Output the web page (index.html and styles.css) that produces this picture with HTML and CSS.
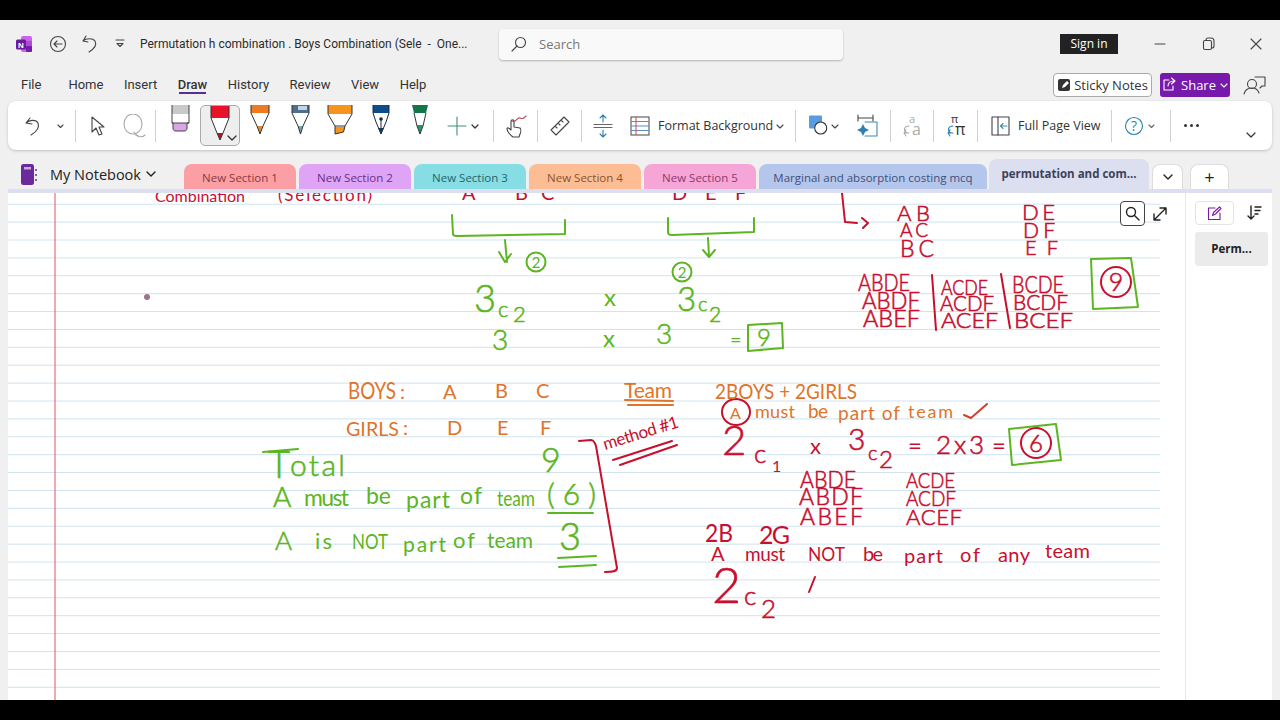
FILE: index.html
```html
<!DOCTYPE html>
<html lang="en">
<head>
    <meta charset="UTF-8">
    <title>Permutation h combination - OneNote</title>
    <link rel="stylesheet" href="styles.css">
</head>
<body>
<div class="app">

    <!-- Title bar -->
    <div class="titlebar">
        <svg width="18" height="18" viewBox="0 0 18 18"><rect x="5" y="1" width="11" height="16" rx="2" fill="#ca64ea"/><rect x="10" y="6" width="6" height="5" fill="#ae4bd5"/><rect x="10" y="11" width="6" height="6" rx="1" fill="#7719aa"/><rect y="4.500" width="10" height="10" rx="1.500" fill="#6a1a9c"/><text x="5" y="12.500" text-anchor="middle" class="logo-n">N</text></svg>
        <svg width="40" height="24" viewBox="0 0 40 24" class="ic"><circle cx="24" cy="12" r="7.500"/><path d="M28 12h-8M23 9l-3 3 3 3"/></svg>
        <svg width="32" height="24" viewBox="0 0 32 24" class="ic"><path d="M12 4L9 9l5 1M9 9c3-3 10-3 12 0 2 4-1 8-6 11"/></svg>
        <svg width="28" height="24" viewBox="0 0 28 24" class="ic"><path d="M10 8h8M11 11.500h6l-3 3z"/></svg>
        <div class="doc-title">Permutation h combination . Boys Combination (Sele&nbsp; -&nbsp; One...</div>
        <div class="search">
            <svg width="16" height="16" viewBox="0 0 16 16" class="ic"><circle cx="9.500" cy="6.500" r="5"/><path d="M6 10l-5 5"/></svg>
            <span>Search</span>
        </div>
        <div class="signin">Sign in</div>
        <svg width="66" height="24" viewBox="0 0 66 24" class="ic"><path d="M37 12h10"/></svg>
        <svg width="48" height="24" viewBox="0 0 48 24" class="ic"><rect x="19.500" y="8.500" width="8" height="9" rx="1.500"/><path d="M22 8c0-2 1-2 2-2h3c2 0 3 1 3 3v5c0 1-1 2-2 2"/></svg>
        <svg width="48" height="24" viewBox="0 0 48 24" class="ic"><path d="M19 7l10 10M29 7L19 17"/></svg>
    </div>

    <!-- Menu -->
    <div class="menubar">
        <span class="menu-file">File</span>
        <span>Home</span>
        <span>Insert</span>
        <span class="menu-on">Draw</span>
        <span>History</span>
        <span>Review</span>
        <span>View</span>
        <span>Help</span>
        <div class="sticky">
            <svg width="14" height="14" viewBox="0 0 14 14"><rect x="1" y="1" width="12" height="12" rx="2" fill="#333"/><path d="M5 10l1-3 4-4 2 2-4 4z" fill="#fff"/></svg>
            Sticky Notes
        </div>
        <div class="share">
            <svg width="15" height="15" viewBox="0 0 15 15" class="ic-w"><path d="M7 3H2v10h9V9M6 9c0-3 2-5 6-5M9.500 1L13 4 9.500 7"/></svg>
            Share
            <svg width="8" height="8" viewBox="0 0 8 8" class="ic-w"><path d="M1 3l3 3 3-3"/></svg>
        </div>
        <svg class="person" width="50" height="24" viewBox="0 0 50 24"><circle cx="22" cy="11" r="4.500"/><path d="M14 21c1-4 4-6 8-6s6 2 7 5M25 4h10v9h-3l-2 2"/></svg>
    </div>

    <!-- Draw ribbon -->
    <div class="ribbon">
        <svg width="24" height="24" viewBox="0 0 24 24" class="ic"><path d="M8 4L4 9l6 1M4 9c3-3 10-4 12 0 2 5-2 9-7 12"/></svg>
        <svg width="29" height="24" viewBox="0 0 29 24" class="ic"><path d="M12 11l2.500 2.500L17 11"/></svg>
        <i class="sep"></i>
        <svg width="42" height="24" viewBox="0 0 42 24" class="ic"><path d="M16 3v15l4-4 3 7 3-1-3-7h5z"/></svg>
        <svg width="37" height="24" viewBox="0 0 37 24" class="ic-g"><ellipse cx="15" cy="10" rx="9" ry="10"/><path d="M16 18c2 5 8 6 11 3"/></svg>
        <i class="sep"></i>

        <!-- pens -->
        <svg class="pen" width="44" height="42" viewBox="0 0 44 42"><path d="M16 0h17v9H16z" fill="#c9c9c9"/><path d="M16 9h17v9H16z" fill="#fff"/><path d="M17 18h14v5c0 2-1 3-3 3h-8c-2 0-3-1-3-3z" fill="#dba6e6"/><path d="M16 0v18h1v5c0 2 1 3 3 3h8c2 0 3-1 3-3v-5h2V0M16 18h17" fill="none" stroke="#444"/></svg>
        <div class="pen-on">
            <svg width="38" height="39" viewBox="0 0 38 39"><path d="M10 0h18v12H10z" fill="#e8122a"/><path d="M10 12h18l-6 15h-6z" fill="#fff"/><path d="M16 27h6l-3 7z" fill="#b3162a"/><path d="M10 0v12l6 15 3 7 3-7 6-15V0" fill="none" stroke="#333"/><path d="M27 30l4 4 4-4" class="chev"/></svg>
        </div>
        <svg class="pen" width="40" height="42" viewBox="0 0 40 42"><path d="M11 0h18v8H11z" fill="#ee7b22"/><path d="M11 8h18l-6 13h-6z" fill="#fff"/><path d="M17 21h6l-3 8z" fill="#e88a3a"/><path d="M11 0v8l6 13 3 8 3-8 6-13V0" fill="none" stroke="#333"/></svg>
        <svg class="pen" width="40" height="42" viewBox="0 0 40 42"><path d="M12 0h17v8H12z" fill="#4f6f8c"/><path d="M18 1h9v4h-9z" fill="#bcd8e6"/><path d="M12 8h17l-6 13h-5z" fill="#fff"/><path d="M18 21h5l-2.500 8z" fill="#71a8b8"/><path d="M12 0v8l6 13 2.500 8 2.500-8 6-13V0" fill="none" stroke="#333"/></svg>
        <svg class="pen" width="40" height="42" viewBox="0 0 40 42"><path d="M8 0h24v9H8z" fill="#f7941d"/><path d="M8 9h24l-7 12H15z" fill="#fff"/><path d="M15 22h10l-1.500 5-8.500 2z" fill="#f7941d"/><path d="M8 0v9l7 12v8l8.500-2 1.500-6 7-12V0M15 21h10" fill="none" stroke="#333"/></svg>
        <svg class="pen" width="41" height="42" viewBox="0 0 41 42"><path d="M13 0h16v8H13z" fill="#0f4c8a"/><path d="M13 8h16l-3 9-5 12-5-12z" fill="#fff"/><path d="M13 0v8l3 9 5 12 5-12 3-9V0M21 14v15" fill="none" stroke="#1c2a3a"/><circle cx="21" cy="14" r="1.800" fill="#1c2a3a"/><path d="M18 23h6l-3 6z" fill="#1c3a54"/></svg>
        <svg class="pen" width="39" height="42" viewBox="0 0 39 42"><path d="M11 0h16l-1 4-1 4H13l-1-4z" fill="#13764a"/><path d="M13 8h12l-4 13h-4z" fill="#fff"/><path d="M16 20h6l-3 9z" fill="#1b9b62"/><path d="M13 8l3 13 3 8 3-8 3-13" fill="none" stroke="#333"/></svg>
        <svg width="53" height="24" viewBox="0 0 53 24" class="plus"><path d="M17 3v18M8 12h18"/><path d="M32 11l3 3 3-3" class="chev"/></svg>
        <i class="sep"></i>

        <svg width="43" height="26" viewBox="0 0 43 26" class="ic"><path d="M19 24c-3-2-6-6-6-8s2-1 4 1V9c0-3 3-3 3 0v5l6 1c1 1 1 4 0 6l-1 3z"/><path d="M18 8c4 2 5-4 8-3s3 1 6-2" class="ink-red"/></svg>
        <i class="sep"></i>
        <svg width="43" height="24" viewBox="0 0 43 24" class="ic"><path d="M13 16L26 3l5 5-13 13zM17 12l2 2M20 9l2 2M23 6l2 2"/></svg>
        <i class="sep"></i>
        <svg width="42" height="26" viewBox="0 0 42 26" class="ic-b"><path d="M21 2v7M18 5l3-3 3 3M21 17v7M18 21l3 3 3-3"/><path d="M12 11.500h18M12 14.500h18" class="grey"/></svg>
        <svg width="30" height="24" viewBox="0 0 30 24"><rect x="7" y="3" width="18" height="18" fill="none" stroke="#444"/><path d="M7 7.500h18M7 12h18M7 16.500h18" stroke="#5a8cc5" fill="none"/><path d="M12 3v18" stroke="#c05050"/></svg>
        <span class="rb-label fmt">Format Background</span>
        <svg width="23" height="24" viewBox="0 0 23 24" class="ic"><path d="M5 11l3 3 3-3"/></svg>
        <i class="sep"></i>

        <svg width="46" height="24" viewBox="0 0 46 24" class="ic"><rect x="13" y="1.500" width="13" height="13" rx="1" fill="#5a9be0" stroke="none"/><circle cx="24.700" cy="14" r="6" fill="#fff" stroke="#333"/><path d="M36 11l3 3 3-3"/></svg>
        <svg width="48" height="26" viewBox="0 0 48 26" class="ic"><path d="M16 2v6M31 2v6M16 5h15"/><path d="M23 9h12v14H23" class="blue"/><path d="M21 11l2 4 4 2-4 2-2 4-2-4-4-2 4-2z" fill="#2f7fb0" stroke="none"/></svg>
        <i class="sep"></i>
        <svg width="42" height="26" viewBox="0 0 42 26" class="ic-g"><path d="M18 13c-5 0-6 5-2 7M13 20h5M15 17l-2 3 2 3"/><text x="18" y="10" class="rb-math">a</text><text x="21" y="22" class="rb-math big">a</text></svg>
        <i class="sep"></i>
        <svg width="43" height="26" viewBox="0 0 43 26" class="ic-b"><path d="M19 13c-5 0-6 5-2 7M14 20h5M16 17l-2 3 2 3"/><text x="17" y="10" class="rb-pi">π</text><text x="21" y="22" class="rb-pi big">π</text></svg>
        <i class="sep"></i>
        <svg width="36" height="24" viewBox="0 0 36 24" class="ic"><rect x="14" y="3" width="17" height="18"/><path d="M20 3v18"/><path d="M29 12h-6M25 9.500L22.500 12l2.500 2.500" class="blue"/></svg>
        <span class="rb-label full">Full Page View</span>
        <i class="sep"></i>
        <svg width="58" height="24" viewBox="0 0 58 24" class="ic-b"><circle cx="22" cy="12" r="8.500"/><text x="22" y="16.500" text-anchor="middle" class="rb-help">?</text><path d="M37 11l2.500 2.500L42 11" class="grey"/></svg>
        <i class="sep"></i>
        <div class="dots"><i></i><i></i><i></i></div>
        <svg class="rb-more" width="20" height="12" viewBox="0 0 20 12"><path d="M6 3l4 4 4-4"/></svg>
    </div>

    <!-- Notebook name and section tabs -->
    <div class="tabsrow">
        <div class="notebook">
            <svg width="16" height="21" viewBox="0 0 16 21"><rect width="13" height="21" rx="2.500" fill="#6b2a9b"/><rect x="3" y="3" width="7" height="2.500" fill="#c9a9e4"/><path d="M15 5v2M15 10v2M15 15v2" stroke="#6b2a9b" stroke-width="1.500"/></svg>
            <span>My Notebook</span>
            <svg width="10" height="8" viewBox="0 0 10 8" class="ic-d"><path d="M1 2l4 4 4-4"/></svg>
        </div>
        <div class="tab t1">New Section 1</div>
        <div class="tab t2">New Section 2</div>
        <div class="tab t3">New Section 3</div>
        <div class="tab t4">New Section 4</div>
        <div class="tab t5">New Section 5</div>
        <div class="tab t6">Marginal and absorption costing mcq</div>
        <div class="tab t7">permutation and com...</div>
        <div class="tab-btn more"><svg width="10" height="8" viewBox="0 0 10 8" class="ic-d"><path d="M1 2l4 4 4-4"/></svg></div>
        <div class="tab-btn add">+</div>
    </div>

    <div class="main">
        <div class="canvas">
            <div class="ruled"></div>

            <svg class="ink" viewBox="8 193 1177 507" width="1177" height="507">
                <line x1="55" y1="193" x2="55" y2="700" class="margin-line"/>
                <circle cx="147" cy="297" r="3" fill="#9a7488"/>

                <!-- red notes, top -->
                <g class="red">
                    <text x="155" y="202" font-size="16" textLength="90">Combination</text>
                    <text x="278" y="201" font-size="17" textLength="94">(Selection)</text>
                    <text x="462" y="200" font-size="20">A</text>
                    <text x="515" y="200" font-size="20">B</text>
                    <text x="541" y="200" font-size="20">C</text>
                    <text x="672" y="200" font-size="20">D</text>
                    <text x="705" y="200" font-size="20">E</text>
                    <text x="735" y="200" font-size="20">F</text>
                </g>
                <g class="red lite">
                    <text x="897" y="221" font-size="22" textLength="33">AB</text>
                    <text x="900" y="237" font-size="19" textLength="28">AC</text>
                    <text x="900" y="257" font-size="23" textLength="34">BC</text>
                    <text x="1022" y="220" font-size="22" textLength="33">DE</text>
                    <text x="1023" y="238" font-size="21" textLength="32">DF</text>
                    <text x="1025" y="255" font-size="20" textLength="33">EF</text>

                    <text x="858" y="291" font-size="23" textLength="52" lengthAdjust="spacingAndGlyphs">ABDE</text>
                    <text x="862" y="309" font-size="23" textLength="58" lengthAdjust="spacingAndGlyphs">ABDF</text>
                    <text x="863" y="327" font-size="23" textLength="57" lengthAdjust="spacingAndGlyphs">ABEF</text>
                    <text x="941" y="295" font-size="21" textLength="47" lengthAdjust="spacingAndGlyphs">ACDE</text>
                    <text x="940" y="311" font-size="21" textLength="54" lengthAdjust="spacingAndGlyphs">ACDF</text>
                    <text x="941" y="328" font-size="21" textLength="57" lengthAdjust="spacingAndGlyphs">ACEF</text>
                    <text x="1012" y="293" font-size="23" textLength="52" lengthAdjust="spacingAndGlyphs">BCDE</text>
                    <text x="1013" y="310" font-size="21" textLength="55" lengthAdjust="spacingAndGlyphs">BCDF</text>
                    <text x="1014" y="328" font-size="22" textLength="59" lengthAdjust="spacingAndGlyphs">BCEF</text>
                    <text x="1116" y="291" font-size="25" text-anchor="middle">9</text>

                    <text x="800" y="488" font-size="23" textLength="56" lengthAdjust="spacingAndGlyphs">ABDE</text>
                    <text x="799" y="505" font-size="23" textLength="64">ABDF</text>
                    <text x="800" y="525" font-size="23" textLength="63">ABEF</text>
                    <text x="906" y="488" font-size="22" textLength="49" lengthAdjust="spacingAndGlyphs">ACDE</text>
                    <text x="906" y="506" font-size="22" textLength="50" lengthAdjust="spacingAndGlyphs">ACDF</text>
                    <text x="906" y="525" font-size="22" textLength="56">ACEF</text>

                    <text x="722" y="455" font-size="42">2</text>
                    <text x="848" y="450" font-size="30">3</text>
                    <text x="712" y="603" font-size="50">2</text>
                    <text x="936" y="454" font-size="26" textLength="48">2x3</text>
                    <text x="754" y="463" font-size="26">c</text>
                    <text x="868" y="460" font-size="20">c</text>
                    <text x="879" y="468" font-size="24">2</text>
                    <text x="744" y="605" font-size="26">c</text>
                    <text x="761" y="618" font-size="26">2</text>
                    <text x="1036" y="452" font-size="24" text-anchor="middle">6</text>
                </g>
                <g class="red">
                    <text x="605" y="450" font-size="17" textLength="78" transform="rotate(-17 605 450)">method #1</text>

                    <text x="772" y="472" font-size="16">1</text>
                    <text x="810" y="454" font-size="22">x</text>
                    <text x="908" y="454" font-size="24">=</text>
                    <text x="992" y="454" font-size="24">=</text>

                    <text x="705" y="542" font-size="25" textLength="28" lengthAdjust="spacingAndGlyphs">2B</text>
                    <text x="759" y="544" font-size="25" textLength="31">2G</text>
                    <text x="711" y="561" font-size="20">A</text>
                    <text x="745" y="561" font-size="19" textLength="40">must</text>
                    <text x="808" y="561" font-size="20" textLength="37" lengthAdjust="spacingAndGlyphs">NOT</text>
                    <text x="863" y="561" font-size="20" textLength="20">be</text>
                    <text x="904" y="563" font-size="20" textLength="39">part</text>
                    <text x="960" y="562" font-size="20" textLength="20">of</text>
                    <text x="998" y="562" font-size="20" textLength="32">any</text>
                    <text x="1045" y="558" font-size="20" textLength="45">team</text>
                </g>
                <g class="st-red">
                    <path d="M842 193l3 29 12 1M862 218l6 5-5 5"/>
                    <path d="M932 275l4 55M1001 274l9 54"/>
                    <ellipse cx="1116" cy="282" rx="15" ry="15"/>
                    <path d="M579 441l12-1c3 0 4 3 5 6l21 122c0 3-3 4-12 4"/>
                    <path d="M613 460l59-19M620 465l57-20"/>
                    <ellipse cx="736" cy="412" rx="14" ry="13"/>
                    <ellipse cx="1036" cy="443" rx="15" ry="15"/>
                    <path d="M809 592l6-15"/>
                </g>

                <!-- green notes -->
                <g class="green lite">
                    <text x="474" y="312" font-size="38">3</text>
                    <text x="498" y="317" font-size="22">c</text>
                    <text x="513" y="322" font-size="22">2</text>
                    <text x="492" y="350" font-size="28">3</text>
                    <text x="677" y="311" font-size="33">3</text>
                    <text x="698" y="311" font-size="20">c</text>
                    <text x="709" y="322" font-size="21">2</text>
                    <text x="656" y="344" font-size="28">3</text>
                    <text x="764" y="346" font-size="24" text-anchor="middle">9</text>
                    <text x="268" y="478" font-size="38">T</text>
                    <text x="290" y="476" font-size="30" textLength="55">otal</text>
                    <text x="541" y="472" font-size="34">9</text>
                    <text x="273" y="507" font-size="28">A</text>
                    <text x="547" y="505" font-size="30" textLength="49">(6)</text>
                    <text x="275" y="550" font-size="26">A</text>
                    <text x="559" y="550" font-size="38">3</text>
                </g>
                <g class="green">
                    <text x="604" y="306" font-size="24">x</text>
                    <text x="603" y="347" font-size="24">x</text>
                    <text x="730" y="347" font-size="20">=</text>
                    <text x="536" y="268" font-size="15" text-anchor="middle">2</text>
                    <text x="682" y="278" font-size="15" text-anchor="middle">2</text>

                    <text x="304" y="506" font-size="23" textLength="45">must</text>
                    <text x="366" y="504" font-size="23" textLength="25">be</text>
                    <text x="406" y="508" font-size="23" textLength="44">part</text>
                    <text x="460" y="504" font-size="23" textLength="22">of</text>
                    <text x="497" y="506" font-size="21" textLength="38" lengthAdjust="spacingAndGlyphs">team</text>
                    <text x="315" y="549" font-size="22" textLength="17">is</text>
                    <text x="352" y="549" font-size="22" textLength="36" lengthAdjust="spacingAndGlyphs">NOT</text>
                    <text x="403" y="552" font-size="21" textLength="43">part</text>
                    <text x="453" y="548" font-size="22" textLength="22">of</text>
                    <text x="487" y="548" font-size="21" textLength="46">team</text>
                </g>
                <g class="st-green">
                    <path d="M452 215l1 19c0 2 2 2 4 2l108-2v-14"/>
                    <path d="M505 240l2 22M499 252l6 10 6-8"/>
                    <circle cx="536" cy="262" r="9.500"/>
                    <path d="M668 218v14c0 2 2 3 4 3l82-3v-14"/>
                    <path d="M708 238l1 18M703 250l6 7 6-7"/>
                    <circle cx="682" cy="272" r="9.500"/>
                    <path d="M748 325l34-2 1 25-35 3z"/>
                    <path d="M1091 259l40-1 7 49-45 2z"/>
                    <path d="M1009 429l47-5 5 36-49 5z"/>
                    <path d="M263 452l35-3"/>
                    <path d="M548 513h45M558 558l38-2M559 567l37-2"/>
                </g>

                <!-- orange notes -->
                <g class="orange">
                    <text x="348" y="399" font-size="23" textLength="48" lengthAdjust="spacingAndGlyphs">BOYS</text>
                    <text x="400" y="399" font-size="20">:</text>
                    <text x="443" y="399" font-size="20">A</text>
                    <text x="495" y="398" font-size="20">B</text>
                    <text x="536" y="398" font-size="20">C</text>
                    <text x="346" y="436" font-size="20" textLength="53" lengthAdjust="spacingAndGlyphs">GIRLS</text>
                    <text x="403" y="435" font-size="20">:</text>
                    <text x="447" y="435" font-size="20">D</text>
                    <text x="497" y="435" font-size="20">E</text>
                    <text x="540" y="435" font-size="20">F</text>
                    <text x="624" y="398" font-size="21" textLength="48">Team</text>
                    <text x="715" y="399" font-size="21" textLength="142" lengthAdjust="spacingAndGlyphs">2BOYS + 2GIRLS</text>
                    <text x="730" y="419" font-size="16">A</text>
                    <text x="755" y="418" font-size="18" textLength="40">must</text>
                    <text x="808" y="418" font-size="19" textLength="20">be</text>
                    <text x="838" y="420" font-size="19" textLength="62">part of</text>
                    <text x="908" y="418" font-size="18" textLength="45">team</text>
                </g>
                <g class="st-orange">
                    <path d="M625 400l48 1M628 405h45"/>
                    <path d="M964 415l7 3 16-14" class="thin-red"/>
                </g>
            </svg>

            <div class="page-tools">
                <div class="find"><svg width="15" height="15" viewBox="0 0 15 15" class="ic-d"><circle cx="6" cy="6" r="4.500"/><path d="M9.500 9.500L14 14"/></svg></div>
                <svg width="16" height="16" viewBox="0 0 16 16" class="ic-d"><path d="M2 14L14 2M8 2h6v6M2 8v6h6"/></svg>
            </div>
        </div>

        <!-- Pages pane -->
        <div class="pages">
            <div class="pages-top">
                <div class="new-page"><svg width="15" height="15" viewBox="0 0 15 15" class="ic-p"><path d="M8 2H1.500v11.500H13V7M5.500 9.500l1-3L12.500 1 14 2.500 8.500 8z"/></svg></div>
                <svg width="16" height="16" viewBox="0 0 16 16" class="ic-d"><path d="M5 1v13M2 11l3 3 3-3M9 2h6M9 5.500h5M9 9h3"/></svg>
            </div>
            <div class="page-item">Perm...</div>
        </div>
    </div>
</div>
</body>
</html>
```

FILE: styles.css
```css
* {
    box-sizing: border-box;
}

body {
    margin: 0;
    background-color: #000;
    font-family: "Open Sans", "Noto Sans", Arial, sans-serif;
    color: #333;
}

.app {
    width: 1280px;
    height: 680px;
    margin-top: 20px;
    background-color: #f0f0f0;
    overflow: hidden;
}

svg {
    display: block;
    flex: none;
}

.ic, .ic-g, .ic-b, .ic-d, .ic-p, .ic-w, .plus, .chev, .person, .rb-more {
    fill: none;
    stroke: #444;
    stroke-width: 1.1;
    stroke-linecap: round;
    stroke-linejoin: round;
}

.ic-g { stroke: #aaa; }
.ic-b { stroke: #2f7fb0; }
.ic-d { stroke: #222; stroke-width: 1.4; }
.ic-p { stroke: #7719aa; }
.ic-w { stroke: #fff; }
.plus { stroke: #3f9270; }
.chev { stroke: #333; stroke-width: 1.3; }
.grey { stroke: #666; }
.blue { stroke: #3f8ab5; }
.ink-red { stroke: #c04050; }

/* title bar */
.titlebar {
    height: 48px;
    padding-left: 16px;
    display: flex;
    align-items: center;
}

.logo-n {
    font: bold 8px "Liberation Sans", sans-serif;
    fill: #fff;
}

.doc-title {
    margin-left: 6px;
    width: 328px;
    font-family: Roboto, sans-serif;
    font-size: 12px;
    white-space: pre;
    overflow: hidden;
    color: #2b2b2b;
}

.search {
    margin-left: 31px;
    width: 344px;
    height: 31px;
    padding-left: 12px;
    display: flex;
    align-items: center;
    gap: 12px;
    background-color: #f9f9f9;
    border-radius: 4px;
    box-shadow: 0 1px 2px rgba(0, 0, 0, 0.25);
    font-size: 13px;
    color: #777;
}

.signin {
    margin-left: 217px;
    width: 58px;
    height: 20px;
    line-height: 20px;
    text-align: center;
    background-color: #222;
    color: #fff;
    font-size: 12px;
}

/* menu */
.menubar {
    height: 33px;
    padding-left: 21px;
    display: flex;
    align-items: center;
    gap: 20.500px;
    font-family: Roboto, sans-serif;
    font-size: 13px;
}

.menu-file {
    margin-right: 6.500px;
}

.menu-on {
    font-weight: 500;
    box-shadow: 0 3px 0 -1px #5c2d91;
}

.sticky {
    margin-left: auto;
    width: 99px;
    height: 24px;
    display: flex;
    align-items: center;
    justify-content: center;
    gap: 3px;
    font-family: "Open Sans", sans-serif;
    font-size: 13px;
    background-color: #fff;
    border: 1px solid #aaa;
    border-radius: 4px;
    white-space: nowrap;
}

.share {
    margin-left: -12.500px;
    width: 70px;
    height: 24px;
    display: flex;
    align-items: center;
    justify-content: center;
    gap: 4px;
    font-family: "Open Sans", sans-serif;
    font-size: 13px;
    color: #fff;
    background-color: #7719aa;
    border-radius: 3px;
}

.person {
    margin-left: -20.500px;
}

/* ribbon */
.ribbon {
    height: 49px;
    margin: 0 8px;
    padding-left: 14px;
    display: flex;
    align-items: center;
    background-color: #fff;
    border-radius: 8px;
    box-shadow: 0 1px 3px rgba(0, 0, 0, 0.2);
}

.sep {
    flex: none;
    width: 1px;
    height: 32px;
    background-color: #d0d0d0;
}

.pen {
    align-self: flex-start;
    margin-top: 3.500px;
}

.pen-on {
    flex: none;
    align-self: flex-start;
    margin-top: 3.500px;
    width: 40px;
    height: 41px;
    background-color: #eeeeee;
    border: 1px solid #aaa;
    border-radius: 5px;
}

.rb-label {
    flex: none;
    margin-left: 4px;
    font-size: 12.500px;
    white-space: nowrap;
}

.fmt {
    width: 114px;
}

.full {
    width: 83px;
    margin-right: 10px;
}

.rb-math, .rb-pi {
    font: 11px "Open Sans", sans-serif;
    fill: #aaa;
    stroke: none;
}

.rb-pi {
    fill: #333;
}

.big {
    font: 16px "Open Sans", sans-serif;
}

.rb-help {
    font: 14px "Open Sans", sans-serif;
    fill: #2f7fb0;
    stroke: none;
}

.dots {
    flex: none;
    width: 40px;
    display: flex;
    justify-content: center;
    gap: 3px;
}

.dots i {
    width: 3px;
    height: 3px;
    border-radius: 50%;
    background-color: #333;
}

.rb-more {
    margin-left: auto;
    margin-right: 11px;
    align-self: flex-end;
    margin-bottom: 8px;
    stroke: #333;
    stroke-width: 1.2;
}

/* tabs */
.tabsrow {
    height: 39px;
    display: flex;
    align-items: flex-end;
}

.notebook {
    width: 184px;
    height: 30px;
    padding-left: 21px;
    display: flex;
    align-items: center;
    gap: 13px;
    font-size: 14.500px;
    color: #222;
}

.notebook svg:last-child {
    margin-left: -8px;
}

.tab {
    width: 112px;
    height: 25px;
    margin-right: 3px;
    line-height: 27px;
    text-align: center;
    font-size: 11.500px;
    white-space: nowrap;
    border-radius: 8px 8px 0 0;
}

.t1 { background-color: #fb9fa5; color: #8a3a40; }
.t2 { background-color: #e0a4f6; color: #6a2f85; }
.t3 { background-color: #86dde3; color: #23666c; }
.t4 { background-color: #fdbd94; color: #8a5230; }
.t5 { background-color: #f5a5d6; color: #8c3a6c; }

.t6 {
    width: 228px;
    margin-right: 2px;
    background-color: #b4c6ec;
    color: #3f5078;
}

.t7 {
    width: 160px;
    height: 30px;
    line-height: 30px;
    font-weight: 700;
    font-size: 11.500px;
    background-color: #dcdff0;
    color: #3f4258;
}

.tab-btn {
    height: 25px;
    display: flex;
    align-items: center;
    justify-content: center;
    background-color: #fff;
    border: 1px solid #ddd;
    border-bottom: none;
    border-radius: 8px 8px 0 0;
}

.more {
    width: 31px;
    margin-right: 7px;
}

.add {
    width: 39px;
    font-size: 18px;
    color: #222;
}

/* page area */
.main {
    height: 511px;
    margin: 0 8px;
    display: flex;
    border-top: 4px solid #dcdff0;
}

.canvas {
    position: relative;
    width: 1177px;
    background-color: #fff;
    overflow: hidden;
}

.ruled {
    width: 1152px;
    height: 495px;
    background-image: linear-gradient(transparent 16.500px, #cfe3ee 16.500px);
    background-size: 100% 17.900px;
    background-position: 0 -6.200px;
}

.ink {
    position: absolute;
    left: 0;
    top: 0;
}

.ink text {
    font-family: Lato, "Open Sans", sans-serif;
}

.margin-line {
    stroke: #e8505a;
    stroke-width: 1;
}

.red { fill: #c8102e; color: #c8102e; }
.green { fill: #5cb521; color: #5cb521; }
.orange { fill: #e0742a; color: #e0742a; }

/* big pen strokes: light weight with a thin outline */
.lite {
    font-weight: 300;
    stroke: currentColor;
    stroke-width: 0.6;
}

.ink .lite text {
    font-weight: 300;
}

.st-red, .st-green, .st-orange {
    fill: none;
    stroke-width: 2;
    stroke-linecap: round;
    stroke-linejoin: round;
}

.st-red { stroke: #c8102e; }
.st-green { stroke: #5cb521; }
.st-orange { stroke: #e0742a; }
.thin-red { stroke: #d0402a; }

.page-tools {
    position: absolute;
    left: 1112px;
    top: 8px;
    display: flex;
    align-items: center;
    gap: 7px;
}

.find {
    width: 25px;
    height: 25px;
    display: flex;
    align-items: center;
    justify-content: center;
    background-color: #fff;
    border: 1px solid #444;
    border-radius: 4px;
}

/* pages pane */
.pages {
    width: 87px;
    padding-left: 9px;
    background-color: #fff;
    border-left: 1px solid #e6e6e6;
}

.pages-top {
    height: 39px;
    padding-top: 8px;
    display: flex;
    align-items: flex-start;
    gap: 12px;
}

.pages-top > svg {
    margin-top: 4px;
}

.new-page {
    width: 39px;
    height: 24px;
    display: flex;
    align-items: center;
    justify-content: center;
    border: 1px solid #e4e4e4;
    border-radius: 4px;
}

.page-item {
    width: 73px;
    height: 34px;
    line-height: 34px;
    text-align: center;
    font-size: 11.500px;
    font-weight: 700;
    color: #222;
    background-color: #ebebeb;
    border-radius: 3px;
}
```
